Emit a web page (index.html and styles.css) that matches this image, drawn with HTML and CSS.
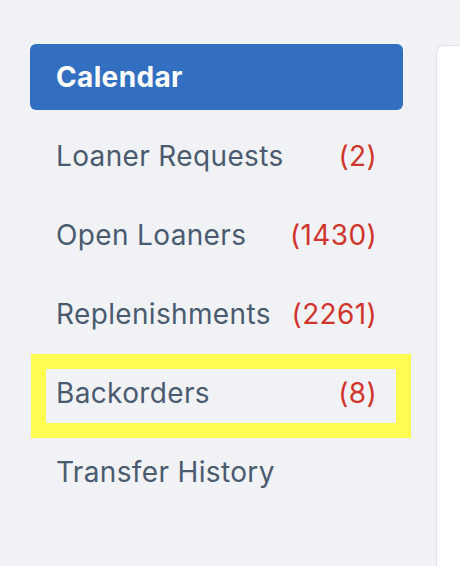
FILE: index.html
```html
<!DOCTYPE html>
<html>
<head>
<meta charset="utf-8">
<link rel="stylesheet" href="styles.css">
</head>
<body>
<div class="layout">
  <nav class="sidebar">
    <a class="nav-item active"><span class="label">Calendar</span></a>
    <a class="nav-item"><span class="label">Loaner Requests</span><span class="count">(2)</span></a>
    <a class="nav-item"><span class="label">Open Loaners</span><span class="count">(1430)</span></a>
    <a class="nav-item"><span class="label">Replenishments</span><span class="count">(2261)</span></a>
    <a class="nav-item highlighted"><span class="label">Backorders</span><span class="count">(8)</span></a>
    <a class="nav-item"><span class="label">Transfer History</span></a>
  </nav>
  <main class="panel"></main>
</div>
</body>
</html>
```
FILE: styles.css
```css
html, body {
  margin: 0;
  padding: 0;
  height: 100%;
}
body {
  background: #f1f2f6;
  font-family: Inter, "Noto Sans", sans-serif;
  overflow: hidden;
}
.layout {
  display: flex;
  padding: 44px 0 0 30px;
  gap: 33px;
  height: 100%;
  box-sizing: border-box;
}
.sidebar {
  display: flex;
  flex-direction: column;
  gap: 13px;
  width: 373px;
  flex-shrink: 0;
}
.nav-item {
  position: relative;
  display: flex;
  align-items: center;
  justify-content: space-between;
  height: 66px;
  padding: 0 26px 0 26px;
  border-radius: 6px;
  font-size: 28px;
  letter-spacing: 0.35px;
  color: #4a5b70;
}
.nav-item.active {
  background: #336fc1;
  color: #ffffff;
  font-weight: 700;
}
.count {
  color: #d0352d;
}
.highlighted::after {
  content: "";
  position: absolute;
  left: 1px;
  top: -6px;
  width: 380px;
  height: 84px;
  box-sizing: border-box;
  border: 15px solid #fefc50;
}
.panel {
  flex: 1;
  margin-top: 1px;
  background: #ffffff;
  border: 1px solid #dde2e8;
  border-right: none;
  border-bottom: none;
  border-radius: 8px 0 0 0;
}
```
